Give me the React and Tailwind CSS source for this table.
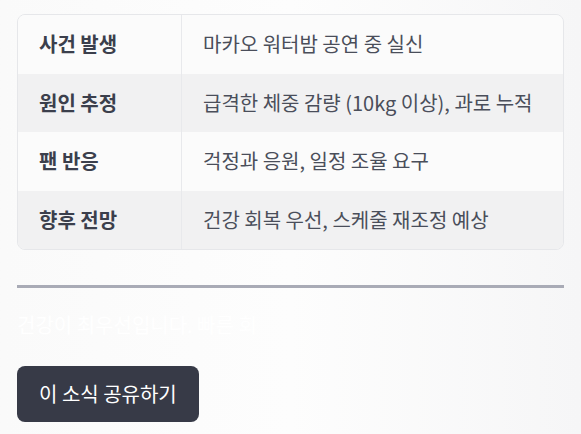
const rows = [
  ['사건 발생', '마카오 워터밤 공연 중 실신'],
  ['원인 추정', '급격한 체중 감량 (10kg 이상), 과로 누적'],
  ['팬 반응', '걱정과 응원, 일정 조율 요구'],
  ['향후 전망', '건강 회복 우선, 스케줄 재조정 예상'],
];

export default function App() {
  return (
    <div
      className="min-h-screen w-full bg-gradient-to-r from-[#fafafa] via-[#fdfdfd] to-[#f6f6f7] px-[17px] pt-[14px]"
      style={{ fontFamily: '"Noto Sans CJK KR", "Noto Sans", sans-serif' }}
    >
      {/* 요약 표 */}
      <div className="overflow-hidden rounded-lg border border-[#e6e7ea]">
        {rows.map(([label, value], i) => (
          <div
            key={label}
            className={`grid grid-cols-[164px_1fr] ${i % 2 === 1 ? 'bg-[#f1f1f2]' : 'bg-[#fbfbfb]'}`}
          >
            <div className="border-r border-[#e8e9ec] px-[21px] py-[15px] text-[20px] leading-[28.5px] font-bold text-[#3b3f4c]">
              {label}
            </div>
            <div className="px-[21px] py-[15px] text-[20px] leading-[28.5px] text-[#4a4e5a]">{value}</div>
          </div>
        ))}
      </div>

      <div className="mt-[35px] h-[3px] bg-[#a9abb6]" />

      <p className="mt-[22px] whitespace-nowrap text-[20px] leading-[30px] text-white">
        건강이 최우선입니다. 빠른 회
      </p>

      <button className="mt-[26px] rounded-lg bg-[#373a47] px-[22px] py-[14px] text-[20px] leading-[28px] text-white">
        이 소식 공유하기
      </button>
    </div>
  );
}
